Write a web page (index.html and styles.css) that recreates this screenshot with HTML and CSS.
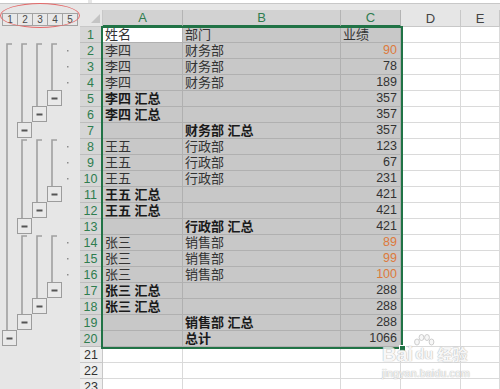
FILE: index.html
```html
<!DOCTYPE html>
<html lang="zh">
<head>
  <meta charset="UTF-8">
  <title>分级显示</title>
  <link rel="stylesheet" href="styles.css">
</head>
<body>
  <div class="topbar">
    <div class="namebox"></div>
    <div class="formula"></div>
  </div>

  <div class="sheet" id="sheet">
    <div class="levels">
      <span class="lvl">1</span><span class="lvl">2</span><span class="lvl">3</span><span class="lvl">4</span><span class="lvl">5</span>
    </div>
    <div class="corner"><span class="tri"></span></div>
    <div class="colhead sel">A</div>
    <div class="colhead sel">B</div>
    <div class="colhead sel">C</div>
    <div class="colhead">D</div>
    <div class="colhead">E</div>
    <div class="outline" id="outline"></div>
    <div class="selection"><span class="handle"></span></div>
  </div>

  <div class="ring"></div>

  <div class="watermark">
    <div class="wm-logo">
      <span>Bai</span>
      <svg class="paw" width="22" height="22" viewBox="0 0 22 22">
        <ellipse cx="4" cy="8" rx="2.4" ry="3"/>
        <ellipse cx="8.5" cy="3.5" rx="2.4" ry="3"/>
        <ellipse cx="14" cy="3.5" rx="2.4" ry="3"/>
        <ellipse cx="18.5" cy="8" rx="2.4" ry="3"/>
      </svg>
      <span class="du">du</span>
      <span class="jy">经验</span>
    </div>
    <div class="wm-url">jingyan.baidu.com</div>
  </div>

  <script>
    // rows: name, dept, score, flags (b = bold labels, o = orange score)
    const rows = [
      ["姓名", "部门", "业绩", ""],
      ["李四", "财务部", 90, "o"],
      ["李四", "财务部", 78, ""],
      ["李四", "财务部", 189, ""],
      ["李四 汇总", "", 357, "b"],
      ["李四 汇总", "", 357, "b"],
      ["", "财务部 汇总", 357, "b"],
      ["王五", "行政部", 123, ""],
      ["王五", "行政部", 67, ""],
      ["王五", "行政部", 231, ""],
      ["王五 汇总", "", 421, "b"],
      ["王五 汇总", "", 421, "b"],
      ["", "行政部 汇总", 421, "b"],
      ["张三", "销售部", 89, "o"],
      ["张三", "销售部", 99, "o"],
      ["张三", "销售部", 100, "o"],
      ["张三 汇总", "", 288, "b"],
      ["张三 汇总", "", 288, "b"],
      ["", "销售部 汇总", 288, "b"],
      ["", "总计", 1066, "b"]
    ];
    const totalRows = 23;

    function buildGrid() {
      const sheet = document.getElementById("sheet");
      let html = "";
      for (let i = 0; i < totalRows; i++) {
        const r = rows[i];
        const n = i + 1;
        if (!r) {
          html += `<div class="rowhead">${n}</div>`;
          html += `<div class="cell"></div><div class="cell"></div><div class="cell"></div><div class="cell"></div><div class="cell"></div>`;
          continue;
        }
        const bold = r[3].includes("b") ? " bold" : "";
        const num = typeof r[2] === "number";
        const orange = r[3].includes("o") ? " orange" : "";
        html += `<div class="rowhead sel">${n}</div>`;
        html += `<div class="cell sel${bold}${n === 1 ? " active" : ""}">${r[0]}</div>`;
        html += `<div class="cell sel${bold}">${r[1]}</div>`;
        html += `<div class="cell sel${num ? " num" : ""}${orange}">${r[2]}</div>`;
        html += `<div class="cell"></div><div class="cell"></div>`;
      }
      sheet.insertAdjacentHTML("beforeend", html);
    }

    function buildOutline() {
      const top = n => 16 * (n - 1);
      const lineX = [7, 22, 37, 52];
      const boxX = [2, 17, 32, 47];
      let svg = `<svg width="80" height="${totalRows * 16}">`;

      function bracket(level, from, boxRow) {
        const x = lineX[level];
        const y = top(from) + 1;
        svg += `<path class="ol-line" d="M${x + 5} ${y} H${x} V${top(boxRow) - 1}"/>`;
      }
      function box(level, row) {
        const x = boxX[level];
        const y = top(row) - 1;
        svg += `<rect class="ol-box" x="${x + 0.5}" y="${y + 0.5}" width="14" height="15"/>`;
        svg += `<path class="ol-minus" d="M${x + 4.5} ${y + 8.5} H${x + 10.5}"/>`;
      }

      bracket(0, 2, 20);
      [2, 8, 14].forEach(start => {
        bracket(1, start, start + 5);
        bracket(2, start, start + 4);
        bracket(3, start, start + 3);
        for (let k = 0; k < 3; k++) {
          svg += `<rect class="ol-dot" x="67" y="${top(start + k) + 7}" width="1.5" height="1.5"/>`;
        }
        box(3, start + 3);
        box(2, start + 4);
        box(1, start + 5);
      });
      box(0, 20);
      svg += "</svg>";
      document.getElementById("outline").innerHTML = svg;
    }

    buildGrid();
    buildOutline();
  </script>
</body>
</html>
```

FILE: styles.css
```css
html, body {
  margin: 0;
  height: 389px;
  overflow: hidden;
}
body {
  background-color: #e6e6e6;
  font-family: "Liberation Sans", "Noto Sans CJK SC", sans-serif;
  position: relative;
}
.topbar {
  display: flex;
  gap: 4px;
  height: 3px;
  border-bottom: 1px solid #c8c8c8;
  margin-bottom: 6px;
}
.namebox {
  width: 88px;
  background-color: #ffffff;
}
.formula {
  flex: 1;
  background-color: #ffffff;
}
.sheet {
  display: grid;
  grid-template-columns: 80px 23px 80px 158px 60px 60px 1fr;
  grid-template-rows: 17px repeat(23, 16px);
  position: relative;
}
.levels {
  display: flex;
  padding: 3px 0 0 2px;
}
.lvl {
  width: 14px;
  height: 11px;
  border: 1px solid #a3a3a3;
  margin-right: -1px;
  background-color: #e8e8e8;
  color: #4a4a4a;
  font-size: 10px;
  line-height: 11px;
  text-align: center;
}
.corner {
  display: flex;
  justify-content: flex-end;
  align-items: flex-end;
  padding: 0 2px 3px 0;
  border-right: 1px solid #c8c8c8;
  border-bottom: 1px solid #c8c8c8;
}
.tri {
  width: 0;
  height: 0;
  border-left: 9px solid transparent;
  border-bottom: 9px solid #c4c4c4;
}
.colhead {
  box-sizing: border-box;
  background-color: #e6e6e6;
  border-right: 1px solid #c8c8c8;
  border-bottom: 1px solid #c8c8c8;
  color: #444;
  font-size: 13px;
  line-height: 17px;
  text-align: center;
}
.colhead.sel {
  background-color: #d2d2d2;
  color: #2f7d4f;
  border-right-color: #b4b4b4;
  border-bottom: 2px solid #217346;
  line-height: 16px;
}
.outline {
  grid-column: 1;
  grid-row: 2 / span 23;
}
.outline svg {
  display: block;
}
.ol-line {
  fill: none;
  stroke: #a0a0a0;
  stroke-width: 1.6;
}
.ol-box {
  fill: #e9e9e9;
  stroke: #9c9c9c;
  stroke-width: 1;
}
.ol-minus {
  stroke: #555;
  stroke-width: 2;
}
.ol-dot {
  fill: #8c8c8c;
}
.rowhead {
  box-sizing: border-box;
  grid-column: 2;
  background-color: #eeeeee;
  border-right: 1px solid #c8c8c8;
  border-bottom: 1px solid #c8c8c8;
  color: #333;
  font-size: 12.5px;
  line-height: 16px;
  text-align: center;
}
.rowhead.sel {
  background-color: #d6d6d6;
  color: #2f7d4f;
  border-right: 2px solid #217346;
  border-bottom-color: #bdbdbd;
}
.cell {
  box-sizing: border-box;
  background-color: #ffffff;
  border-right: 1px solid #dadada;
  border-bottom: 1px solid #dadada;
  color: #333;
  font-size: 13px;
  line-height: 15px;
  padding: 0 3px 0 2px;
  white-space: nowrap;
  overflow: hidden;
}
.cell.sel {
  background-color: #c8c8c8;
  border-color: #b0b0b0;
}
.cell.active {
  background-color: #ffffff;
}
.cell.bold {
  font-weight: bold;
  color: #1a1a1a;
}
.cell.num {
  text-align: right;
  font-size: 12.5px;
}
.cell.orange {
  color: #dd7a3c;
}
.selection {
  position: absolute;
  left: 101px;
  top: 16px;
  width: 298px;
  height: 319px;
  border: 2px solid #217346;
  pointer-events: none;
}
.handle {
  position: absolute;
  right: -5px;
  bottom: -5px;
  width: 5px;
  height: 5px;
  background-color: #217346;
  border: 1px solid #ffffff;
}
.ring {
  position: absolute;
  left: 0;
  top: 3px;
  width: 78px;
  height: 23px;
  border: 1.5px solid #e46a6a;
  border-radius: 50%;
}
.watermark {
  position: absolute;
  left: 382px;
  top: 334px;
  color: #f6f6f6;
  text-shadow: 0 0 1px #a8a8a8, 0 0 1px #a8a8a8;
  opacity: 0.8;
}
.wm-logo {
  display: flex;
  align-items: flex-end;
  height: 30px;
  font-size: 20px;
  font-weight: bold;
  line-height: 20px;
  position: relative;
}
.paw {
  position: absolute;
  left: 31px;
  top: 0;
  fill: #f6f6f6;
  stroke: #b4b4b4;
  stroke-width: 0.8;
}
.du {
  font-size: 15px;
  margin: 0 4px 0 2px;
}
.jy {
  font-family: "Noto Sans CJK SC", sans-serif;
  font-size: 15px;
}
.wm-url {
  font-size: 10.5px;
  margin-top: 3px;
  letter-spacing: 0.2px;
}
```
